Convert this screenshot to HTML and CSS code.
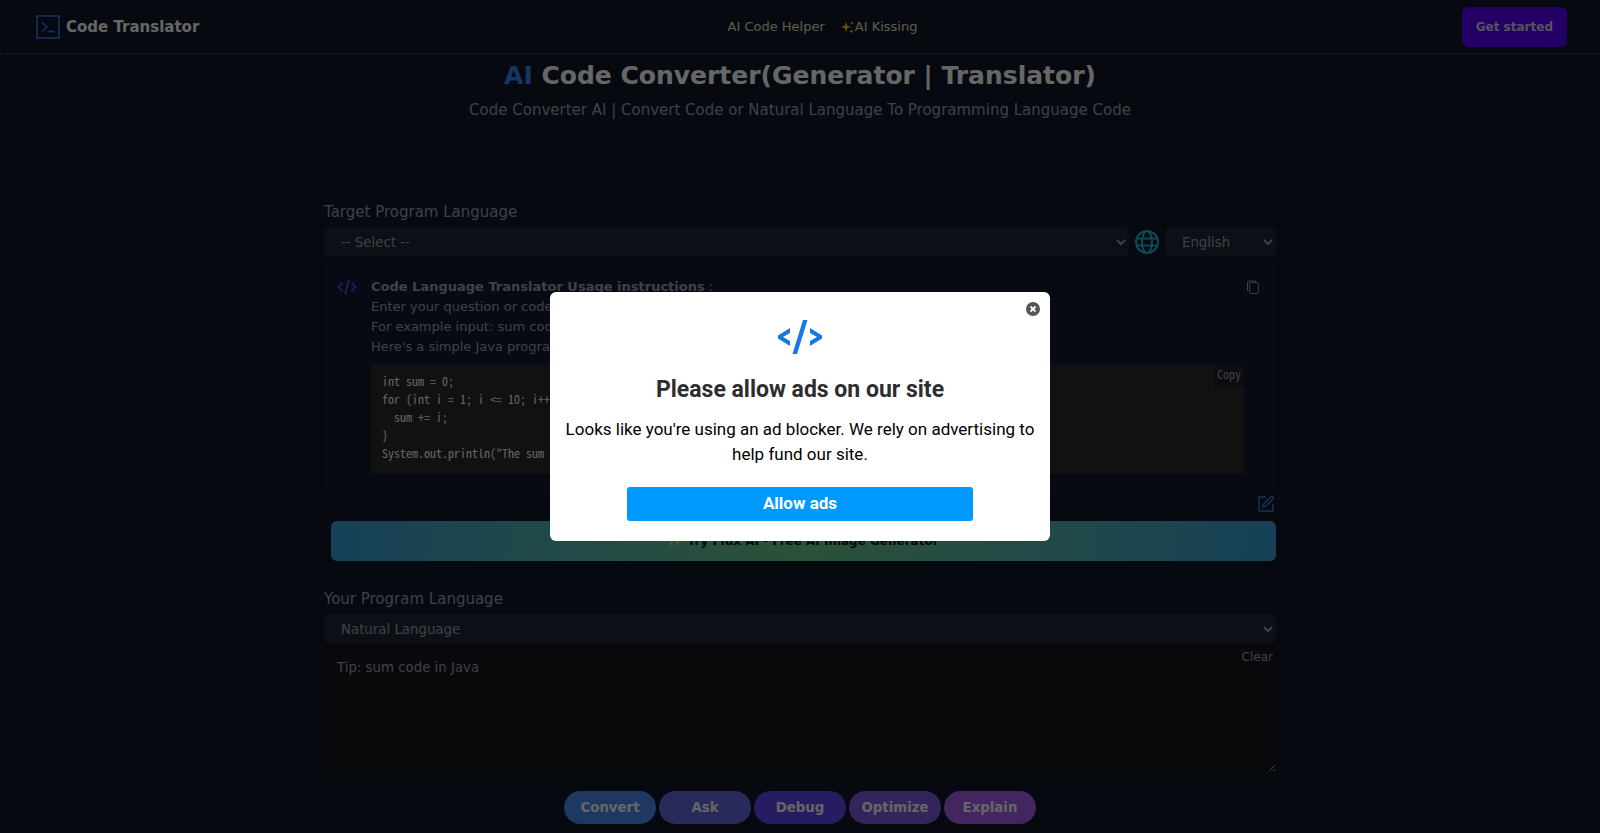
FILE: index.html
```html
<!DOCTYPE html>
<html lang="en">
<head>
  <meta charset="utf-8">
  <title>Code Translator</title>
  <link rel="stylesheet" href="styles.css">
</head>
<body>

  <header class="header">
    <a class="logo" href="#">
      <svg class="logo-icon" viewBox="0 0 24 24" fill="none" stroke="currentColor" stroke-width="1.5">
        <path d="M1 1h22v22H1z"/>
        <path d="M6 7.500l5 4.500l-5 4.500M12 16.500h6.500"/>
      </svg>
      Code Translator
    </a>
    <nav class="nav">
      <a href="#">AI Code Helper</a>
      <a href="#">
        <svg class="sparkles" viewBox="0 0 14 14" fill="currentColor">
          <path d="M5 1.500l1.200 4.300L10 7l-3.800 1.200L5 12.500l-1.200-4.300L0 7l3.800-1.200zM11 1l.5 1.500L13 3l-1.500.5L11 5l-.5-1.500L9 3l1.500-.5zM10.500 9l.6 1.900 1.900.6-1.900.6-.6 1.900-.6-1.900L8 11.500l1.900-.6z"/>
        </svg>AI Kissing</a>
    </nav>
    <button class="get-started">Get started</button>
  </header>

  <main class="main">
    <h1><span class="accent">AI</span> Code Converter(Generator | Translator)</h1>
    <p class="subtitle">Code Converter AI | Convert Code or Natural Language To Programming Language Code</p>

    <div class="content">
      <label class="label" for="target">Target Program Language</label>
      <div class="row">
        <select class="select" id="target"><option>-- Select --</option></select>
        <svg class="globe" viewBox="0 0 24 24" fill="none" stroke="currentColor" stroke-width="2">
          <circle cx="12" cy="12" r="11"/>
          <ellipse cx="12" cy="12" rx="5" ry="11"/>
          <path d="M2 8.500h20M2 15.500h20"/>
        </svg>
        <select class="select select-small" aria-label="Language"><option>English</option></select>
      </div>

      <div class="card">
        <svg class="code-icon" viewBox="0 0 20 16" fill="none" stroke="currentColor" stroke-width="2">
          <path d="M5.500 3.500L1.500 8l4 4.500M14.500 3.500l4 4.500l-4 4.500M12 1L8 15"/>
        </svg>
        <div class="card-text">
          <p><strong>Code Language Translator Usage instructions</strong> :</p>
          <p>Enter your question or code</p>
          <p>For example input: sum code in Java</p>
          <p>Here's a simple Java program</p>
          <div class="code">
<pre>int sum = 0;
for (int i = 1; i &lt;= 10; i++) {
  sum += i;
}
System.out.println("The sum is " + sum);</pre>
            <button class="copy">Copy</button>
          </div>
        </div>
        <button class="icon-button" aria-label="Copy answer">
          <svg class="copy-icon" viewBox="0 0 14 14" fill="none" stroke="currentColor">
            <rect x="3.500" y="2.500" width="9" height="11" rx="2"/>
            <path d="M1.500 11V3q0-2 2-2H10"/>
          </svg>
        </button>
      </div>

      <div class="edit">
        <button class="icon-button" aria-label="Edit">
          <svg class="edit-icon" viewBox="0 0 18 18" fill="none" stroke="currentColor" stroke-width="1.300">
            <path d="M9 2H2v14h14V9M7 8.500L14 1.500q2-.5 2.500 2L9.500 10.500L6 12z"/>
          </svg>
        </button>
      </div>

      <a class="banner" href="#"><span class="star">✨</span> Try Flux AI - Free AI Image Generator</a>

      <label class="label" for="source">Your Program Language</label>
      <select class="select" id="source"><option>Natural Language</option></select>
      <div class="input-box">
        <textarea class="input" aria-label="Your code" placeholder="Tip: sum code in Java"></textarea>
        <button class="clear">Clear</button>
      </div>

      <div class="actions">
        <button class="action convert">Convert</button>
        <button class="action ask">Ask</button>
        <button class="action debug">Debug</button>
        <button class="action optimize">Optimize</button>
        <button class="action explain">Explain</button>
      </div>
    </div>
  </main>

  <div class="overlay">
    <div class="dialog" role="dialog" aria-labelledby="dialog-title">
      <button class="close" aria-label="Close">
        <svg viewBox="0 0 14 14">
          <circle cx="7" cy="7" r="7" fill="#555"/>
          <path d="M4.500 4.500l5 5m0-5l-5 5" stroke="#fff" stroke-width="1.800"/>
        </svg>
      </button>
      <svg class="dialog-icon" viewBox="0 0 44 34" fill="#1578e6">
        <path d="M12 8v5l-7 4L12 21v5L0 18.500v-3zM32 8v5l7 4L32 21v5l12-7.500v-3zM25 0h4.500L19 34h-4.500z"/>
      </svg>
      <h2 id="dialog-title">Please allow ads on our site</h2>
      <p>Looks like you're using an ad blocker. We rely on advertising to help fund our site.</p>
      <button class="allow">Allow ads</button>
    </div>
  </div>

</body>
</html>
```
FILE: styles.css
```css
* {
  box-sizing: border-box;
}

body {
  margin: 0;
  background: #0f172a;
  color: #9ca3af;
  font-family: "DejaVu Sans", sans-serif;
  font-size: 13px;
  line-height: 20px;
}

h1, h2, p, pre {
  margin: 0;
}

a {
  color: inherit;
  text-decoration: none;
}

button {
  border: 0;
  padding: 0;
  background: none;
  color: inherit;
  cursor: pointer;
}

button, select, textarea {
  font-family: inherit;
}

.header {
  display: flex;
  align-items: center;
  justify-content: space-between;
  height: 54px;
  padding: 0 33px 0 36px;
  border-bottom: 1px dotted #475569;
}

.logo {
  display: flex;
  align-items: center;
  gap: 6px;
  color: #fff;
  font-size: 15px;
  font-weight: bold;
}

.logo-icon {
  width: 24px;
  height: 24px;
  color: #3b82f6;
}

.nav {
  display: flex;
  color: #e8e2c0;
}

.nav a {
  display: flex;
  align-items: center;
  margin-right: 16px;
}

.sparkles {
  width: 14px;
  height: 14px;
  color: #facc15;
}

.get-started {
  height: 40px;
  padding: 0 14px;
  border-radius: 6px;
  background: #5700ff;
  color: #d6d0f0;
  font-size: 12px;
  font-weight: bold;
}

.main {
  padding: 6px 16px 7px;
  text-align: center;
}

h1 {
  color: #fff;
  font-size: 25px;
  line-height: 32px;
}

.accent {
  color: #3b82f6;
}

.subtitle {
  margin-top: 6px;
  font-size: 15px;
  line-height: 24px;
}

.content {
  display: flex;
  flex-direction: column;
  max-width: 952px;
  margin: 78px auto 0;
  text-align: left;
}

.label {
  margin-bottom: 3px;
  font-size: 15px;
  line-height: 24px;
}

.row {
  display: flex;
  align-items: center;
  gap: 6px;
}

.select {
  width: 100%;
  height: 30px;
  padding: 0 0 0 13px;
  border: 0;
  border-radius: 6px;
  background-color: #1f2937;
  color: #9ca3af;
}

.row .select {
  flex: 1;
}

.row .select-small {
  flex: 0 0 111px;
}

.globe {
  width: 24px;
  height: 24px;
  color: #22b8cf;
}

.card {
  display: flex;
  align-items: flex-start;
  margin-top: 7px;
  padding: 13px;
  background: #111c30;
}

.code-icon {
  width: 20px;
  height: 20px;
  color: #4f46e5;
}

.card-text {
  flex: 1;
  margin-left: 14px;
}

.code {
  position: relative;
  margin: 7px 0 6px;
  padding: 8px 11px 12px;
  background: #2b2b2b;
  color: #f8f8f2;
}

pre, .copy {
  font-family: "Noto Sans Mono CJK JP", "Noto Sans Mono CJK SC", "Liberation Mono", monospace;
  font-size: 12px;
  line-height: 18px;
}

.copy {
  position: absolute;
  top: 0;
  right: 0;
  padding: 1px 3px 4px;
  background: #222028;
  color: #9ca3af;
}

.icon-button {
  display: flex;
}

.copy-icon {
  width: 14px;
  height: 14px;
  margin: 3px 3px 0 2px;
}

.edit {
  display: flex;
  justify-content: flex-end;
  height: 28px;
  padding: 2px 1px 0;
}

.edit-icon {
  width: 18px;
  height: 18px;
  color: #3b82f6;
}

.banner {
  margin: 0 0 26px 7px;
  border-radius: 6px;
  background: linear-gradient(100deg, #38a3dc, #6ecb8c 50%, #38a3dc);
  color: #0f172a;
  font-size: 12px;
  font-weight: bold;
  line-height: 40px;
  text-align: center;
}

.star {
  color: #facc15;
}

.input-box {
  position: relative;
  display: flex;
}

.input {
  width: 100%;
  height: 128px;
  padding: 13px;
  border: 0;
  background: #18181f;
  color: #9ca3af;
  line-height: 22px;
  resize: vertical;
}

.input::placeholder {
  color: #9ca3af;
}

.clear {
  position: absolute;
  top: 6px;
  right: 3px;
  font-size: 12px;
}

.actions {
  display: flex;
  justify-content: center;
  gap: 3px;
  margin-top: 19px;
}

.action {
  width: 92px;
  height: 33px;
  border-radius: 17px;
  color: #fff;
  font-weight: bold;
}

.convert { background: #4b8cf5; }
.ask { background: #6469e1; }
.debug { background: #5f48f5; }
.optimize { background: #805ce6; }
.explain { background: #a85def; }

.overlay {
  position: fixed;
  inset: 0;
  display: flex;
  align-items: center;
  justify-content: center;
  background: rgba(0, 0, 0, 0.6);
}

.dialog {
  position: relative;
  display: flex;
  flex-direction: column;
  align-items: center;
  width: 500px;
  padding: 28px 12px 20px;
  border-radius: 6px;
  background: #fff;
  color: #000;
  font-family: Roboto, sans-serif;
  font-size: 17px;
  line-height: 25px;
  text-align: center;
}

.close {
  position: absolute;
  top: 10px;
  right: 10px;
  display: flex;
  width: 14px;
  height: 14px;
}

.dialog-icon {
  width: 44px;
  height: 34px;
}

.dialog h2 {
  margin: 20px 0 11px;
  color: #2d2d2d;
  font-size: 23px;
  line-height: 32px;
}

.allow {
  width: 346px;
  height: 34px;
  margin-top: 20px;
  padding-bottom: 2px;
  border-radius: 3px;
  background: #0099ff;
  color: #fff;
  font-size: 17px;
  font-weight: bold;
}
```
